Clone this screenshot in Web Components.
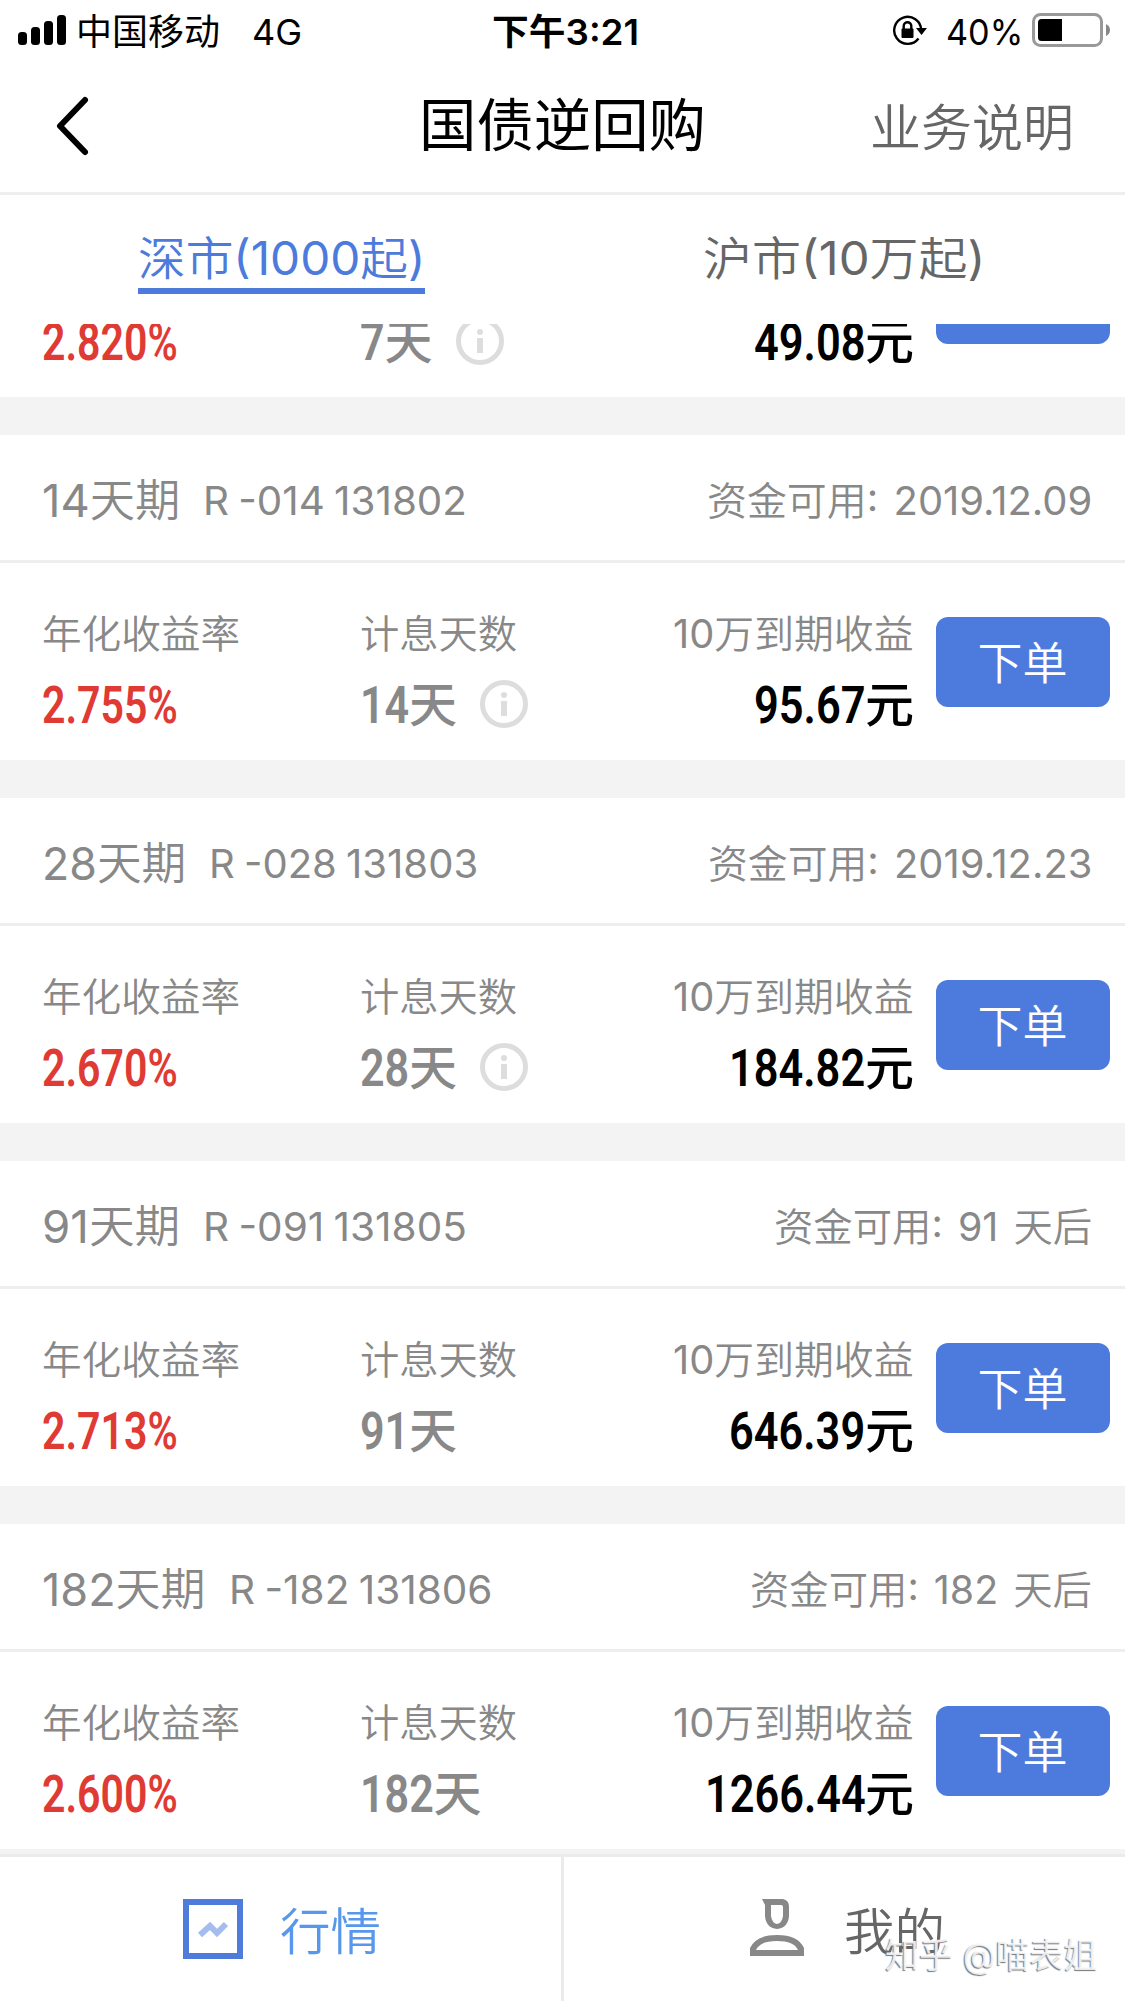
<!DOCTYPE html>
<html lang="zh-CN">
<head>
<meta charset="utf-8">
<title>国债逆回购</title>
<style>
    body{
        margin: 0;
        background: #fff;
        font-family: Inter, "Noto Sans CJK SC", sans-serif;
        color: #000;
    }
</style>
</head>
<body>
<repo-app></repo-app>
<script>
const define = (name, html, setup) => {
    const template = document.createElement('template')
    template.innerHTML = html
    customElements.define(name, class extends HTMLElement{
        constructor(){
            super()
            this.attachShadow({mode: 'open'})
            this.shadowRoot.appendChild(template.content.cloneNode(true))
        }
        connectedCallback(){
            if (setup) setup(this, this.shadowRoot)
        }
    })
}

const lightFont = 'Inter, "Noto Sans CJK SC DemiLight", "Noto Sans CJK SC", sans-serif'

// one line of text squeezed or stretched to a given width
define('fit-text', `<style>
        :host{
            display: flex;
            flex: none;
        }
        span{
            display: block;
            flex: none;
            white-space: nowrap;
            transform-origin: 0 50%;
        }
    </style><span><slot></slot></span>`, (host, root) => {
    const span = root.querySelector('span')
    const width = Number(host.getAttribute('w'))
    host.style.width = width + 'px'
    span.style.transform = `scaleX(${width / span.offsetWidth})`
})

define('status-bar', `
    <style>
        :host{
            display: flex;
            align-items: center;
            height: 60px;
            padding: 0 15px 0 18px;
            font-size: 36px;
            line-height: 54px;
        }
        fit-text{ padding-top: 3px; }
        .signal{ margin-right: 10px; }
        .net{ margin-left: 32px; }
        .time{ margin-left: 190px; font-weight: 600; }
        .lock{ margin-left: auto; }
        .percent{ margin: 0 9px 0 18px; }
        svg{ flex: none; }
    </style>
    <svg class="signal" width="48" height="60">
        <rect x="0" y="32" width="9" height="13" rx="3.5"/>
        <rect x="13" y="27" width="9" height="18" rx="3.5"/>
        <rect x="26" y="21" width="9" height="24" rx="3.5"/>
        <rect x="39" y="15" width="9" height="30" rx="3.5"/>
    </svg>
    <fit-text w="144">中国移动</fit-text>
    <fit-text class="net" w="50">4G</fit-text>
    <fit-text class="time" w="147">下午3:21</fit-text>
    <svg class="lock" width="36" height="60" fill="none" stroke="#000" stroke-width="2.4">
        <path d="M26.500 38.500A13.500 13.500 0 1 1 29.200 30"/>
        <path d="M24 28h11l-5.500 7z" fill="#000" stroke="none"/>
        <rect x="9.500" y="28.500" width="12" height="9.500" rx="1" fill="#000" stroke="none"/>
        <path d="M11.700 29v-3a3.800 3.800 0 0 1 7.600 0V29"/>
    </svg>
    <fit-text class="percent" w="77">40%</fit-text>
    <svg width="78" height="60">
        <rect x="1.500" y="14.500" width="68" height="31" rx="7" fill="none" stroke="#999" stroke-width="3"/>
        <path d="M30 19H9.500a3.500 3.500 0 0 0-3.500 3.500v15a3.500 3.500 0 0 0 3.500 3.500H30z"/>
        <path d="M74 24q4 2 4 6t-4 6z" fill="#888"/>
    </svg>
`)

define('nav-header', `
    <style>
        :host{
            display: grid;
            grid-template-columns: 1fr auto 1fr;
            align-items: center;
            height: 132px;
            padding: 0 51px 0 54px;
            border-bottom: 3px solid #eee;
        }
        .title{ margin-right: 3px; font-size: 57px; line-height: 84px; }
        .help{
            justify-self: end;
            padding-top: 4px;
            font-family: ${lightFont};
            font-size: 50px;
            line-height: 76px;
            color: #666;
        }
    </style>
    <svg width="36" height="62" viewBox="0 0 36 62" fill="none" stroke="#000" stroke-width="6" stroke-linecap="round" stroke-linejoin="round">
        <path d="M31 5L6 31L31 57"/>
    </svg>
    <fit-text class="title" w="287">国债逆回购</fit-text>
    <fit-text class="help" w="204">业务说明</fit-text>
`)

define('market-tabs', `
    <style>
        :host{
            display: grid;
            grid-template-columns: 1fr 1fr;
            justify-items: center;
            height: 129px;
            font-family: ${lightFont};
            font-size: 46px;
            color: #666;
        }
        fit-text{
            box-sizing: border-box;
            height: 99px;
            padding-top: 29px;
            line-height: 68px;
        }
        .on{
            color: #4d7bdb;
            border-bottom: 6px solid #4d7bdb;
        }
    </style>
    <fit-text class="on" w="287">深市(1000起)</fit-text>
    <fit-text w="282">沪市(10万起)</fit-text>
`)

define('info-icon', `
    <style>
        :host{ display: block; height: 48px; }
        svg{ display: block; }
    </style>
    <svg width="48" height="48" viewBox="0 0 48 48" fill="#ddd">
        <circle cx="24" cy="24" r="21.500" fill="none" stroke="#ddd" stroke-width="5"/>
        <circle cx="24" cy="15" r="3"/>
        <rect x="21" y="21" width="6" height="15"/>
    </svg>
`)

define('order-button', `
    <style>
        :host{
            display: block;
            box-sizing: border-box;
            width: 174px;
            height: 90px;
            padding: 13px 1px 0 0;
            border-radius: 12px;
            background: #4d7bdd;
            color: #fff;
            font-size: 45px;
            line-height: 68px;
            text-align: center;
        }
    </style>
    <slot></slot>
`)

define('repo-card', `
    <style>
        :host{
            display: block;
            height: 325px;
            background: #fff;
            border-bottom: 38px solid #f3f3f3;
            color: #888;
            font-family: ${lightFont};
            font-size: 39px;
        }
        :host([tail]){ height: 197px; }
        .head{
            display: flex;
            align-items: center;
            box-sizing: border-box;
            height: 128px;
            padding: 6px 33px 0 42px;
            border-bottom: 3px solid #eee;
            line-height: 66px;
        }
        .term{ font-size: 45px; }
        .code{ margin: 0 auto 0 23px; word-spacing: -2px; }
        .avail{ word-spacing: 4px; }
        .body{
            display: grid;
            grid-template-columns: 318px 1fr auto 174px;
            height: 197px;
            padding: 0 15px 0 42px;
        }
        .cell{ padding-top: 41px; line-height: 60px; }
        :host([tail]) .cell{ padding-top: 101px; }
        .value{
            display: flex;
            align-items: center;
            height: 84px;
            font-family: Roboto, "Noto Sans CJK SC", sans-serif;
            font-size: 51px;
            font-weight: 600;
            line-height: 76px;
        }
        .rate{ color: #df3a34; }
        .gain{ color: #000; }
        .right{
            display: flex;
            flex-direction: column;
            align-items: flex-end;
            margin-right: 22px;
        }
        .right .label{ margin-right: 1px; }
        .yuan{ font-size: 48px; font-weight: 500; }
        info-icon{ margin: -4px 0 0 23px; }
        order-button{ margin-top: 54px; }
    </style>
    <div class="head">
        <fit-text class="term"></fit-text>
        <fit-text class="code"></fit-text>
        <fit-text class="avail"></fit-text>
    </div>
    <div class="body">
        <div class="cell">
            <fit-text class="label" w="198">年化收益率</fit-text>
            <div class="value rate"><fit-text class="rate-num" w="136"></fit-text></div>
        </div>
        <div class="cell">
            <fit-text class="label" w="157">计息天数</fit-text>
            <div class="value days"><fit-text class="days-num"></fit-text><fit-text class="yuan" w="48">天</fit-text></div>
        </div>
        <div class="cell right">
            <fit-text class="label" w="240">10万到期收益</fit-text>
            <div class="value gain"><fit-text class="gain-num"></fit-text><fit-text class="yuan" w="49">元</fit-text></div>
        </div>
        <order-button>下单</order-button>
    </div>
`, (host, root) => {
    // digits are 24.5 wide, the point 13.5
    const numWidth = s => [...s].reduce((sum, c) => sum + (c === '.' ? 13.5 : 24.5), 0)
    const put = (cls, text, width) => {
        const el = root.querySelector('.' + cls)
        el.textContent = text
        if (width) el.setAttribute('w', width)
    }
    const d = host.data
    put('rate-num', d.rate)
    put('days-num', d.days, numWidth(d.days))
    put('gain-num', d.gain, numWidth(d.gain))
    if (d.info) root.querySelector('.days').appendChild(document.createElement('info-icon'))
    if (d.term){
        put('term', d.term, d.termW)
        put('code', d.code, d.codeW)
        put('avail', d.avail, d.availW)
    } else {
        // scrolled under the tabs, only its values are left
        host.setAttribute('tail', '')
        root.querySelectorAll('.head, .label').forEach(el => el.remove())
        root.querySelector('order-button').textContent = ''
    }
})

define('repo-list', `
    <style>
        :host{
            display: flex;
            flex-direction: column;
            justify-content: flex-end;
            height: 1530px;
            overflow: hidden;
        }
        .cards{ margin-bottom: -33px; }
    </style>
    <div class="cards"></div>
`, (host, root) => {
    const rows = [
        {rate: '2.820%', days: '7', gain: '49.08', info: true},
        {term: '14天期', termW: 138, code: 'R -014 131802', codeW: 264, avail: '资金可用: 2019.12.09', availW: 385, rate: '2.755%', days: '14', gain: '95.67', info: true},
        {term: '28天期', termW: 144, code: 'R -028 131803', codeW: 269, avail: '资金可用: 2019.12.23', availW: 384, rate: '2.670%', days: '28', gain: '184.82', info: true},
        {term: '91天期', termW: 138, code: 'R -091 131805', codeW: 264, avail: '资金可用: 91 天后', availW: 318, rate: '2.713%', days: '91', gain: '646.39'},
        {term: '182天期', termW: 164, code: 'R -182 131806', codeW: 263, avail: '资金可用: 182 天后', availW: 342, rate: '2.600%', days: '182', gain: '1266.44'}
    ]
    for (const row of rows){
        const card = document.createElement('repo-card')
        card.data = row
        root.querySelector('.cards').appendChild(card)
    }
})

define('bottom-tabs', `
    <style>
        :host{
            display: grid;
            grid-template-columns: 561px 1fr;
            height: 144px;
            border-top: 3px solid #ebebeb;
            font-family: ${lightFont};
            font-size: 50px;
            line-height: 76px;
            background: #fff;
        }
        .tab{ display: flex; align-items: center; }
        .quote{ padding-left: 183px; gap: 37px; color: #5798ec; }
        .mine{ padding-left: 186px; gap: 40px; color: #666; border-left: 3px solid #ebebeb; }
        fit-text{ padding-top: 5px; }
    </style>
    <div class="tab quote">
        <svg width="60" height="60" viewBox="0 0 60 60" fill="none">
            <rect x="3" y="3" width="54" height="54" stroke="#4f7bdb" stroke-width="6"/>
            <path d="M17 36L27 27L34 34L43 25" stroke="#a5bcee" stroke-width="6"/>
        </svg>
        <fit-text w="101">行情</fit-text>
    </div>
    <div class="tab mine">
        <svg width="54" height="60" viewBox="0 0 54 60" fill="#888" fill-rule="evenodd">
            <path d="M12 0H33Q39 1 39 8V17Q38 29 27 30Q16 29 15 17V6ZM21 6V17Q22 24 27 25Q32 24 33 17V8Q33 6 31 6Z"/>
            <path d="M0 57V49Q6 36 27 36T54 49V57ZM6 51H48Q44 42 27 42T6 51Z"/>
        </svg>
        <fit-text w="101">我的</fit-text>
    </div>
`)

define('water-mark', `
    <style>
        :host{
            position: absolute;
            left: 885px;
            top: 1930px;
            font-size: 35px;
            line-height: 50px;
            color: rgba(255, 255, 255, .85);
            text-shadow: -1px 1px 1px #777;
        }
    </style>
    <fit-text w="213">知乎 @喵表姐</fit-text>
`)

define('repo-app', `
    <style>
        :host{
            display: block;
            position: relative;
            width: 1125px;
            height: 2001px;
            overflow: hidden;
        }
    </style>
    <status-bar></status-bar>
    <nav-header></nav-header>
    <market-tabs></market-tabs>
    <repo-list></repo-list>
    <bottom-tabs></bottom-tabs>
    <water-mark></water-mark>
`)
</script>
</body>
</html>
